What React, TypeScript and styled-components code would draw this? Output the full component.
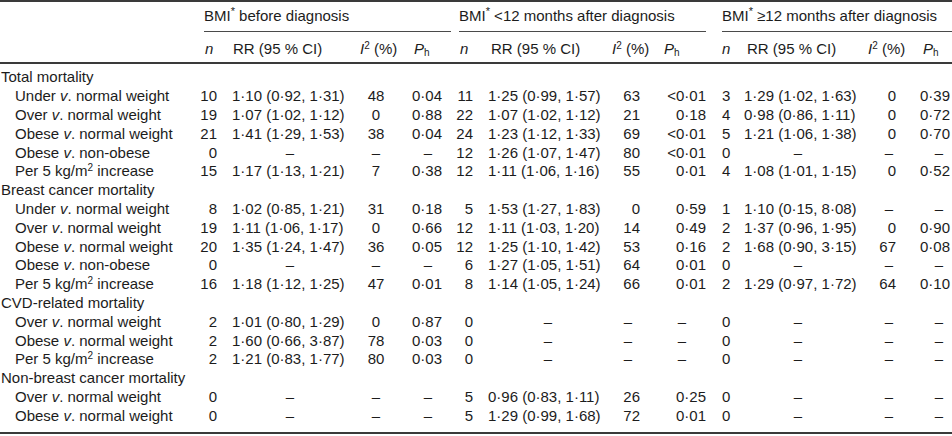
import React from "react";
import styled, { createGlobalStyle } from "styled-components";

const GlobalStyle = createGlobalStyle`
  html, body {
    margin: 0;
    padding: 0;
    background: #ffffff;
  }
  body {
    font-family: "Liberation Sans", Arial, Helvetica, sans-serif;
    color: #1c1c1c;
  }
`;

// label | n RR I2 Ph | n RR I2 Ph | n RR I2 Ph
const COLUMNS = "197px 22px 132px 50px 50px 24px 130px 40px 65px 26px 128px 42px 46px";

type Align = "left" | "right" | "center";
interface ColSpec {
  align: Align;
  pl?: number;
  pr?: number;
}

// how numbers sit in each data column
const NUM_SPEC: ColSpec[] = [
  { align: "right", pr: 2 },
  { align: "left", pl: 13 },
  { align: "center" },
  { align: "center", pl: 2 },
  { align: "right", pr: 2 },
  { align: "left", pl: 13 },
  { align: "right", pr: 5 },
  { align: "right", pr: 4 },
  { align: "left", pl: 12 },
  { align: "left", pl: 8 },
  { align: "right", pr: 10 },
  { align: "right", pr: 2 },
];

// how the en dash sits when there is no value
const DASH_SPEC: ColSpec[] = [
  { align: "right", pr: 2 },
  { align: "center", pl: 10 },
  { align: "center" },
  { align: "center", pl: 4 },
  { align: "right", pr: 2 },
  { align: "center", pl: 16 },
  { align: "center", pl: 6 },
  { align: "center", pl: 9 },
  { align: "left", pl: 12 },
  { align: "center", pr: 4 },
  { align: "center", pl: 8 },
  { align: "center", pl: 20 },
];

// left offsets of the second header row
const HEAD_PAD = [8, 14, 9, 13, 9, 16, 7, 19, 12, 11, 4, 17];

const Table = styled.div`
  width: 952px;
  font-size: 15px;
  line-height: 18px;
  border-top: 2px solid #3a3a3a;
  border-bottom: 2px solid #3a3a3a;
  white-space: nowrap;
`;

const Head = styled.div`
  border-bottom: 2px solid #3a3a3a;
`;

const Row = styled.div<{ $h: number }>`
  display: grid;
  grid-template-columns: ${COLUMNS};
  height: ${({ $h }) => $h}px;
  align-items: center;
`;

const Body = styled.div`
  padding: 4px 0 7px;
`;

const GroupCell = styled.div<{ $ml: number; $mr: number }>`
  grid-column: span 4;
  align-self: stretch;
  margin-left: ${({ $ml }) => $ml}px;
  margin-right: ${({ $mr }) => $mr}px;
  padding-top: 5px;
  border-bottom: 1px solid #4a4a4a;
`;

const HeadCell = styled.div<{ $pl: number }>`
  padding-left: ${({ $pl }) => $pl}px;
  padding-top: 3px;
`;

const Label = styled.div<{ $indent?: boolean }>`
  padding-left: ${({ $indent }) => ($indent ? 15 : 1)}px;
`;

const SectionLabel = styled.div`
  grid-column: 1 / -1;
  padding-left: 1px;
`;

const Cell = styled.div<{ $align: Align; $pl?: number; $pr?: number }>`
  text-align: ${({ $align }) => $align};
  padding-left: ${({ $pl }) => $pl ?? 0}px;
  padding-right: ${({ $pr }) => $pr ?? 0}px;
`;

const Em = styled.i`
  font-style: italic;
`;

const Sup = styled.sup<{ $size?: number }>`
  font-size: ${({ $size }) => $size ?? 10}px;
  line-height: 0;
  vertical-align: ${({ $size }) => ($size ? "6px" : "5px")};
`;

const Sub = styled.sub`
  font-size: 10px;
  line-height: 0;
  vertical-align: -2px;
`;

const I2 = () => (
  <>
    <Em>I</Em>
    <Sup>2</Sup> (%)
  </>
);

const Ph = () => (
  <>
    <Em>P</Em>
    <Sub>h</Sub>
  </>
);

const Bmi = () => (
  <>
    BMI<Sup $size={11}>*</Sup>
  </>
);

const Per5 = () => (
  <>
    Per 5 kg/m<Sup>2</Sup> increase
  </>
);

const vs = (a: string, b: string) => (
  <>
    {a} <Em>v</Em>. {b}
  </>
);

type RowData = [React.ReactNode, string[]];
interface Section {
  title: string;
  rows: RowData[];
}

const D = "–";

const SECTIONS: Section[] = [
  {
    title: "Total mortality",
    rows: [
      [vs("Under", "normal weight"), ["10", "1·10 (0·92, 1·31)", "48", "0·04", "11", "1·25 (0·99, 1·57)", "63", "<0·01", "3", "1·29 (1·02, 1·63)", "0", "0·39"]],
      [vs("Over", "normal weight"), ["19", "1·07 (1·02, 1·12)", "0", "0·88", "22", "1·07 (1·02, 1·12)", "21", "0·18", "4", "0·98 (0·86, 1·11)", "0", "0·72"]],
      [vs("Obese", "normal weight"), ["21", "1·41 (1·29, 1·53)", "38", "0·04", "24", "1·23 (1·12, 1·33)", "69", "<0·01", "5", "1·21 (1·06, 1·38)", "0", "0·70"]],
      [vs("Obese", "non-obese"), ["0", D, D, D, "12", "1·26 (1·07, 1·47)", "80", "<0·01", "0", D, D, D]],
      [<Per5 />, ["15", "1·17 (1·13, 1·21)", "7", "0·38", "12", "1·11 (1·06, 1·16)", "55", "0·01", "4", "1·08 (1·01, 1·15)", "0", "0·52"]],
    ],
  },
  {
    title: "Breast cancer mortality",
    rows: [
      [vs("Under", "normal weight"), ["8", "1·02 (0·85, 1·21)", "31", "0·18", "5", "1·53 (1·27, 1·83)", "0", "0·59", "1", "1·10 (0·15, 8·08)", D, D]],
      [vs("Over", "normal weight"), ["19", "1·11 (1·06, 1·17)", "0", "0·66", "12", "1·11 (1·03, 1·20)", "14", "0·49", "2", "1·37 (0·96, 1·95)", "0", "0·90"]],
      [vs("Obese", "normal weight"), ["20", "1·35 (1·24, 1·47)", "36", "0·05", "12", "1·25 (1·10, 1·42)", "53", "0·16", "2", "1·68 (0·90, 3·15)", "67", "0·08"]],
      [vs("Obese", "non-obese"), ["0", D, D, D, "6", "1·27 (1·05, 1·51)", "64", "0·01", "0", D, D, D]],
      [<Per5 />, ["16", "1·18 (1·12, 1·25)", "47", "0·01", "8", "1·14 (1·05, 1·24)", "66", "0·01", "2", "1·29 (0·97, 1·72)", "64", "0·10"]],
    ],
  },
  {
    title: "CVD-related mortality",
    rows: [
      [vs("Over", "normal weight"), ["2", "1·01 (0·80, 1·29)", "0", "0·87", "0", D, D, D, "0", D, D, D]],
      [vs("Obese", "normal weight"), ["2", "1·60 (0·66, 3·87)", "78", "0·03", "0", D, D, D, "0", D, D, D]],
      [<Per5 />, ["2", "1·21 (0·83, 1·77)", "80", "0·03", "0", D, D, D, "0", D, D, D]],
    ],
  },
  {
    title: "Non-breast cancer mortality",
    rows: [
      [vs("Over", "normal weight"), ["0", D, D, D, "5", "0·96 (0·83, 1·11)", "26", "0·25", "0", D, D, D]],
      [vs("Obese", "normal weight"), ["0", D, D, D, "5", "1·29 (0·99, 1·68)", "72", "0·01", "0", D, D, D]],
    ],
  },
];

const HEAD_LABELS = () => [<Em key="n">n</Em>, "RR (95 % CI)", <I2 key="i" />, <Ph key="p" />];

const ROW_H = 18.8;

export default function App() {
  const subHeads = [...HEAD_LABELS(), ...HEAD_LABELS(), ...HEAD_LABELS()];
  return (
    <>
      <GlobalStyle />
      <Table>
        <Head>
          <Row $h={30}>
            <div />
            <GroupCell $ml={7} $mr={0}>
              <Bmi /> before diagnosis
            </GroupCell>
            <GroupCell $ml={8} $mr={4}>
              <Bmi /> &lt;12 months after diagnosis
            </GroupCell>
            <GroupCell $ml={12} $mr={0}>
              <Bmi /> ≥12 months after diagnosis
            </GroupCell>
          </Row>
          <Row $h={30}>
            <div />
            {subHeads.map((h, i) => (
              <HeadCell key={i} $pl={HEAD_PAD[i]}>
                {h}
              </HeadCell>
            ))}
          </Row>
        </Head>
        <Body>
          {SECTIONS.map((s) => (
            <React.Fragment key={s.title}>
              <Row $h={ROW_H}>
                <SectionLabel>{s.title}</SectionLabel>
              </Row>
              {s.rows.map(([label, vals], r) => (
                <Row $h={ROW_H} key={r}>
                  <Label $indent>{label}</Label>
                  {vals.map((v, i) => {
                    const spec = v === D ? DASH_SPEC[i] : NUM_SPEC[i];
                    return (
                      <Cell key={i} $align={spec.align} $pl={spec.pl} $pr={spec.pr}>
                        {v}
                      </Cell>
                    );
                  })}
                </Row>
              ))}
            </React.Fragment>
          ))}
        </Body>
      </Table>
    </>
  );
}
